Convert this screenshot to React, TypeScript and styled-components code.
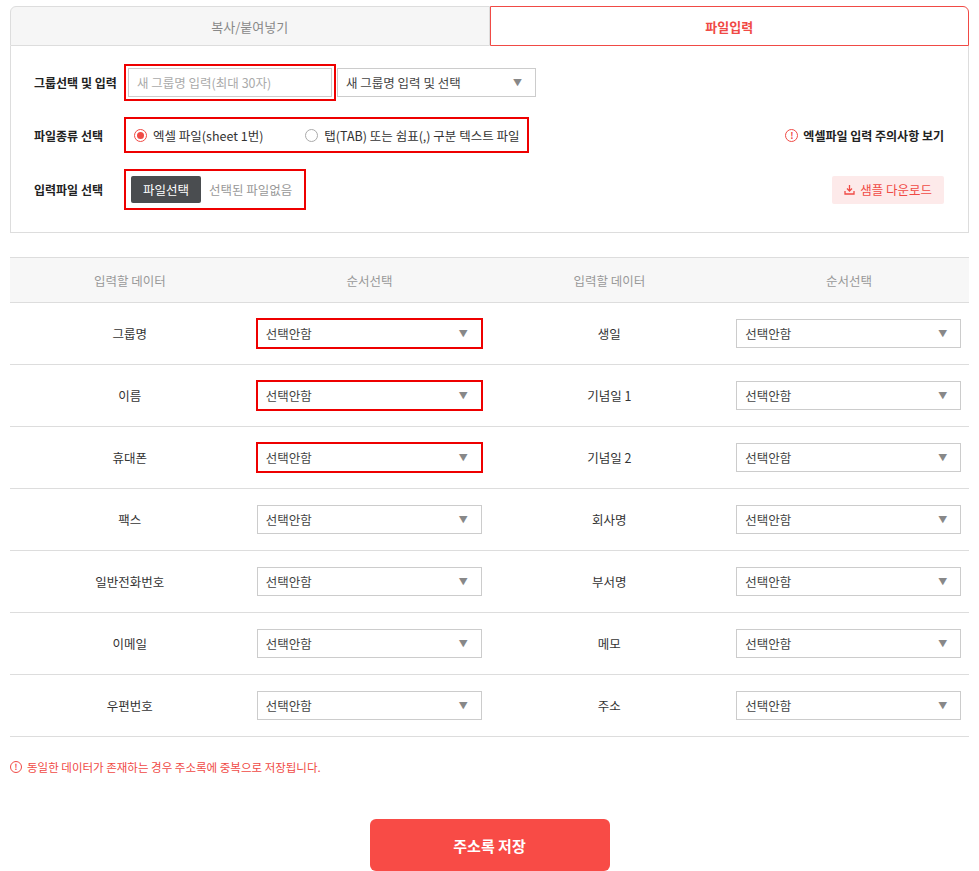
import React from "react";
import styled, { createGlobalStyle } from "styled-components";

const Global = createGlobalStyle`
  body { margin: 0; background: #fff; font-family: "Noto Sans CJK KR", "Noto Sans", sans-serif; color: #333; }
  * { box-sizing: border-box; }
`;
const Page = styled.div` padding: 6px 10px 0 10px; width: 979px; `;
const Tabs = styled.div` display: flex; height: 40px; `;
const Tab = styled.div<{ $active?: boolean }>`
  flex: 1; display: flex; align-items: center; justify-content: center; font-size: 13px;
  color: ${p => (p.$active ? "#f04a45" : "#888")};
  background: ${p => (p.$active ? "#fff" : "#f6f6f6")};
  border: 1px solid ${p => (p.$active ? "#f04a45" : "#ddd")};
  border-radius: ${p => (p.$active ? "0 6px 0 0" : "6px 0 0 0")};
  font-weight: ${p => (p.$active ? 700 : 400)};
`;
const Panel = styled.div`
  border: 1px solid #ddd; border-top: none; padding: 20px 24px 24px 23px;
  display: flex; flex-direction: column; gap: 20px;
`;
const FormRow = styled.div` display: flex; align-items: center; min-height: 32px; `;
const Label = styled.div` width: 90px; font-size: 12px; font-weight: 700; color: #222; `;
const Mark = styled.div` outline: 2px solid #e00; display: flex; align-items: center; padding: 2px; margin-left: 2px;`;
const TextInput = styled.div`
  width: 204px; height: 29px; border: 1px solid #ccc; font-size: 12.5px; color: #aaa;
  display: flex; align-items: center; padding-left: 8px;
`;
const Select = styled.div<{ $w: number }>`
  width: ${p => p.$w}px; height: 29px; border: 1px solid #ccc; background: #fff; font-size: 12.5px; color: #444;
  display: flex; align-items: center; justify-content: space-between; padding: 0 13px 0 8px;
  &::after { content: "▼"; font-size: 9px; color: #888; }
`;
const Radio = styled.label` display: flex; align-items: center; gap: 6px; font-size: 12.5px; color: #333; padding: 0 6px; height: 28px;`;
const Dot = styled.span<{ $on?: boolean }>`
  width: 13px; height: 13px; border-radius: 50%; border: 1px solid ${p => (p.$on ? "#f04a45" : "#aaa")};
  display: inline-flex; align-items: center; justify-content: center;
  &::after { content: ""; width: 7px; height: 7px; border-radius: 50%; background: ${p => (p.$on ? "#f04a45" : "transparent")}; }
`;
const Spacer = styled.div` flex: 1; `;
const Notice = styled.div` display: flex; align-items: center; gap: 5px; font-size: 12px; font-weight: 700; color: #222; `;
const Icon = styled.span<{ $s: number }>`
  width: ${p => p.$s}px; height: ${p => p.$s}px; border: 1.3px solid #f04a45; border-radius: 50%; color: #f04a45;
  font-size: ${p => p.$s - 4}px; font-weight: 700; display: inline-flex; align-items: center; justify-content: center; line-height: 1;
`;
const FileBtn = styled.div` background: #4a4d50; color: #fff; font-size: 12.5px; height: 27px; padding: 0 12px; border-radius: 2px; display: flex; align-items: center; `;
const FileNone = styled.span` font-size: 12.5px; color: #999; margin: 0 12px 0 8px; `;
const SampleBtn = styled.div` background: #fdeaea; color: #f04a45; font-size: 12.5px; height: 28px; padding: 0 12px; border-radius: 2px; display: flex; align-items: center; gap: 5px; `;
const Table = styled.div` margin-top: 24px; border-top: 1px solid #ddd; `;
const TRow = styled.div<{ $head?: boolean }>`
  display: grid; grid-template-columns: repeat(4, 1fr); align-items: center;
  height: ${p => (p.$head ? 45 : 62)}px; background: ${p => (p.$head ? "#f7f7f7" : "#fff")};
  border-bottom: 1px solid #ddd; font-size: 12.5px; color: ${p => (p.$head ? "#999" : "#333")};
`;
const Cell = styled.div` text-align: center; `;
const SelCell = styled.div` padding-left: 7px; display: flex; `;
const Outline = styled.div<{ $on?: boolean }>` outline: ${p => (p.$on ? "2px solid #e00" : "none")}; outline-offset: -1px; `;
const Warn = styled.div` display: flex; align-items: center; gap: 5px; font-size: 11.5px; color: #f04a45; margin-top: 22px; `;
const SaveWrap = styled.div` display: flex; justify-content: center; margin-top: 44px; `;
const Save = styled.div` width: 240px; height: 52px; background: #f84b46; color: #fff; font-size: 15px; font-weight: 700; border-radius: 6px; display: flex; align-items: center; justify-content: center; `;

const rows: [string, string][] = [["그룹명","생일"],["이름","기념일 1"],["휴대폰","기념일 2"],["팩스","회사명"],["일반전화번호","부서명"],["이메일","메모"],["우편번호","주소"]];

export default function App() {
  return (
    <Page>
      <Global />
      <Tabs><Tab>복사/붙여넣기</Tab><Tab $active>파일입력</Tab></Tabs>
      <Panel>
        <FormRow>
          <Label>그룹선택 및 입력</Label>
          <Mark><TextInput>새 그룹명 입력(최대 30자)</TextInput></Mark>
          <span style={{ width: 3 }} />
          <Select $w={199}>새 그룹명 입력 및 선택</Select>
        </FormRow>
        <FormRow>
          <Label>파일종류 선택</Label>
          <Mark style={{ gap: 30 }}>
            <Radio><Dot $on />엑셀 파일(sheet 1번)</Radio>
            <Radio><Dot />탭(TAB) 또는 쉼표(,) 구분 텍스트 파일</Radio>
          </Mark>
          <Spacer />
          <Notice><Icon $s={13}>!</Icon>엑셀파일 입력 주의사항 보기</Notice>
        </FormRow>
        <FormRow>
          <Label>입력파일 선택</Label>
          <Mark style={{ padding: "5px 0 5px 5px" }}><FileBtn>파일선택</FileBtn><FileNone>선택된 파일없음</FileNone></Mark>
          <Spacer />
          <SampleBtn>
            <svg width="11" height="11" viewBox="0 0 11 11" fill="none" stroke="#f04a45" strokeWidth="1.3"><path d="M5.5 1v6M3 4.5l2.5 2.5L8 4.5M1 7v3h9V7" /></svg>
            샘플 다운로드
          </SampleBtn>
        </FormRow>
      </Panel>
      <Table>
        <TRow $head><Cell>입력할 데이터</Cell><Cell>순서선택</Cell><Cell>입력할 데이터</Cell><Cell>순서선택</Cell></TRow>
        {rows.map(([a, b], i) => (
          <TRow key={a}>
            <Cell>{a}</Cell>
            <SelCell><Outline $on={i < 3}><Select $w={225}>선택안함</Select></Outline></SelCell>
            <Cell>{b}</Cell>
            <SelCell><Select $w={225}>선택안함</Select></SelCell>
          </TRow>
        ))}
      </Table>
      <Warn><Icon $s={12}>!</Icon>동일한 데이터가 존재하는 경우 주소록에 중복으로 저장됩니다.</Warn>
      <SaveWrap><Save>주소록 저장</Save></SaveWrap>
    </Page>
  );
}
